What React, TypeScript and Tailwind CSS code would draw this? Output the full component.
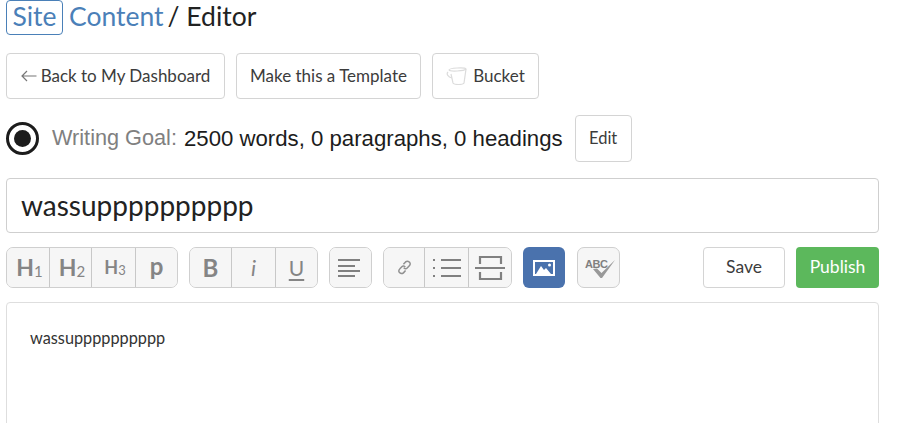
import React from "react";

const sans = "font-['Liberation_Sans',Arial,sans-serif]";
const lato = "font-['Lato',sans-serif]";
const groupBtn = "flex h-full items-center justify-center bg-[#f6f6f6] text-[#858585] border-r border-[#c8c8c8] last:border-r-0";

function OutlineButton({ children, className = "" }: { children: React.ReactNode; className?: string }) {
  return (
    <button className={`flex items-center justify-center rounded-[4px] border border-[#d4d4d4] bg-white text-[#3c3c3c] ${className}`}>
      {children}
    </button>
  );
}

function Group({ children }: { children: React.ReactNode }) {
  return (
    <div className="flex h-[41px] overflow-hidden rounded-[7px] border border-[#cfcfcf] bg-[#f6f6f6]">{children}</div>
  );
}

function Heading({ big, small, size, numSize }: { big: string; small: string; size: string; numSize: string }) {
  return (
    <span className={`${size} ml-[2px] font-bold leading-none tracking-[-1px]`}>
      {big}
      <span className={`${numSize} ml-[1px] align-[-1px] font-normal`}>{small}</span>
    </span>
  );
}

export default function App() {
  return (
    <div className={`h-[423px] w-[912px] overflow-hidden bg-white pl-[6px] pr-[33px] ${lato}`}>
      <div className="flex h-[35px] items-center text-[26.500px] leading-none text-[#222]">
        <span className="flex h-[35px] w-[57px] items-center justify-center rounded-[4px] border border-[#4a80b8] pb-[3px] text-[#4a80b8]">
          Site
        </span>
        <span className="ml-[6px] pb-[3px] text-[#4a80b8]">Content</span>
        <span className="ml-[4px] pb-[3px]">/ Editor</span>
      </div>

      <div className="mt-[18px] flex gap-[11px] text-[17px]">
        <OutlineButton className="h-[46px] w-[219px]">
          <svg width="16" height="12" viewBox="0 0 16 12" className="mr-[4px]" fill="none" stroke="#777" strokeWidth="1.2">
            <path d="M15.500 6H1M6 1L1 6l5 5" />
          </svg>
          Back to My Dashboard
        </OutlineButton>
        <OutlineButton className="h-[46px] w-[185px]">Make this a Template</OutlineButton>
        <OutlineButton className="h-[46px] w-[107px]">
          <svg width="22" height="20" viewBox="0 0 22 20" className="mr-[5px]" fill="none" stroke="#dcdcdc" strokeWidth="1.2">
            <path d="M3 4c0-2 16-3 17-1l-2 14c-1 2-10 2-11 0L5 8" />
            <path d="M3 4c1 2 15 1 17-1M2 6c-2 2 0 5 4 6" />
          </svg>
          Bucket
        </OutlineButton>
      </div>

      <div className={`mt-[16px] flex h-[47px] items-center ${sans}`}>
        <span className="flex h-[33px] w-[33px] items-center justify-center rounded-full border-[3px] border-[#1c1c1c]">
          <span className="h-[17px] w-[17px] rounded-full bg-[#1c1c1c]" />
        </span>
        <span className="ml-[13px] text-[21.700px] text-[#808080]">Writing Goal:</span>
        <span className="ml-[7px] text-[22.200px] text-[#1c1c1c]">2500 words, 0 paragraphs, 0 headings</span>
        <OutlineButton className={`ml-[12px] h-[47px] w-[57px] text-[16.500px] ${lato}`}>Edit</OutlineButton>
      </div>

      <div className="mt-[16px] flex h-[55px] items-center rounded-[4px] border border-[#cfcfcf] px-[14px] pb-[1px] text-[28px] text-[#222]">
        wassupppppppppp
      </div>

      <div className="mt-[14px] flex items-center">
        <Group>
          <span className={`${groupBtn} w-[43px]`}><Heading big="H" small="1" size="text-[23px]" numSize="text-[15px]" /></span>
          <span className={`${groupBtn} w-[42px]`}><Heading big="H" small="2" size="text-[23px]" numSize="text-[15px]" /></span>
          <span className={`${groupBtn} w-[44px]`}><Heading big="H" small="3" size="text-[18px]" numSize="text-[13px]" /></span>
          <span className={`${groupBtn} w-[41px] pb-[4px] text-[24px] font-bold`}>p</span>
        </Group>
        <div className="ml-[11px]">
          <Group>
            <span className={`${groupBtn} w-[42px] text-[24px] font-bold`}>B</span>
            <span className={`${groupBtn} w-[44px] text-[22px] italic text-[#999]`}>i</span>
            <span className={`${groupBtn} w-[41px] text-[21px] underline decoration-2 underline-offset-[3px]`}>U</span>
          </Group>
        </div>
        <div className="ml-[11px]">
          <Group>
            <span className={`${groupBtn} w-[41px] pr-[4px]`}>
              <svg width="22" height="20" viewBox="0 0 22 20" stroke="#808080" strokeWidth="2">
                <path d="M0 2h22M0 8h17M0 13h22M0 18h17" />
              </svg>
            </span>
          </Group>
        </div>
        <div className="ml-[11px]">
          <Group>
            <span className={`${groupBtn} w-[41px]`}>
              <svg width="15" height="15" viewBox="0 0 14 14" fill="none" stroke="#909090" strokeWidth="1.4">
                <path d="M6 4l2-2.200c1.500-1.300 4-.3 4.300 1.300.2 1-.3 1.800-1 2.500L9.500 7.500c-1 1-2.500.8-3.200-.3" />
                <path d="M8 9.800l-2 2.200c-1.500 1.300-4 .3-4.300-1.300-.2-1 .3-1.800 1-2.500L4.500 6.300c1-1 2.500-.8 3.200.3" />
              </svg>
            </span>
            <span className={`${groupBtn} w-[44px]`}>
              <svg width="28" height="20" viewBox="0 0 28 20" stroke="#808080" strokeWidth="2.200">
                <path d="M0 2h2M0 10h2M0 18h2" strokeWidth="2" />
                <path d="M8 2h20M8 10h20M8 18h20" />
              </svg>
            </span>
            <span className={`${groupBtn} w-[42px]`}>
              <svg width="30" height="24" viewBox="0 0 30 24" fill="none" stroke="#808080" strokeWidth="2.200">
                <path d="M5 8V1h21v7M0 12h30M5 16v7h21v-7" />
              </svg>
            </span>
          </Group>
        </div>
        <button className="ml-[11px] flex h-[41px] w-[42px] items-center justify-center rounded-[6px] bg-[#4a72ad]">
          <svg width="22" height="16" viewBox="0 0 22 16">
            <rect x="1" y="1" width="20" height="14" fill="none" stroke="#fff" strokeWidth="2" />
            <path d="M3 14l5-8 3 4 2-2 5 6z" fill="#fff" />
            <circle cx="16.500" cy="5" r="1.500" fill="#fff" />
          </svg>
        </button>
        <button className={`ml-[12px] flex h-[41px] w-[43px] items-center justify-center rounded-[7px] border border-[#cfcfcf] bg-[#f6f6f6] ${sans}`}>
          <span className="relative h-[26px] w-[33px]">
            <span className="absolute left-[3px] top-[4px] text-[11px] font-bold leading-none tracking-[-0.500px] text-[#808080]">ABC</span>
            <svg width="33" height="26" viewBox="0 0 33 26" className="absolute left-0 top-0" fill="#999">
              <path d="M11 14l4-.5 4.500 4.500L33 5 20 23h-1.500z" />
            </svg>
          </span>
        </button>
        <OutlineButton className="ml-auto h-[41px] w-[82px] text-[17.500px]">Save</OutlineButton>
        <button className="ml-[11px] h-[41px] w-[83px] rounded-[4px] bg-[#5cb85c] text-[17.500px] text-white">Publish</button>
      </div>

      <div className="mt-[14px] h-[200px] rounded-[4px] border border-[#dedede] px-[23px] pt-[26px] text-[16.300px] leading-[18px] text-[#333]">
        wassupppppppppp
      </div>
    </div>
  );
}
